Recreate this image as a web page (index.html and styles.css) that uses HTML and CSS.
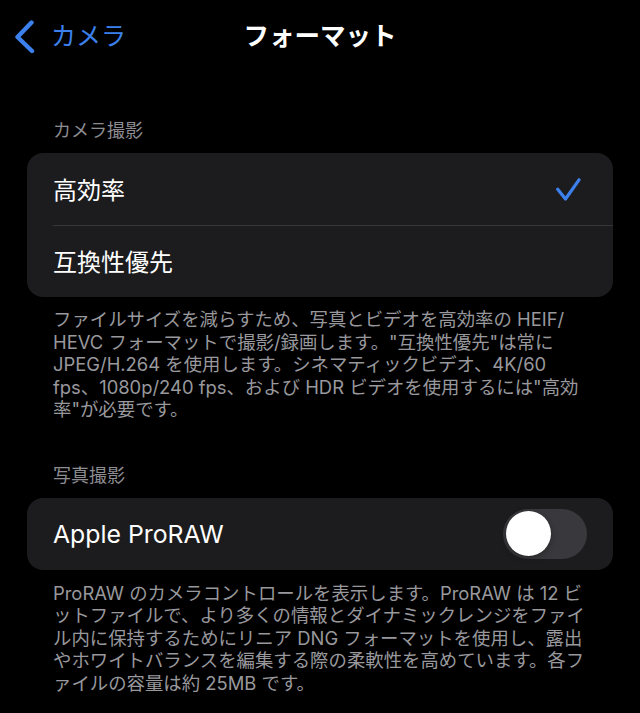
FILE: index.html
```html
<!DOCTYPE html>
<html lang="ja">
<head>
<meta charset="utf-8">
<title>フォーマット</title>
<link rel="stylesheet" href="styles.css">
</head>
<body>
<div class="screen">
  <header class="nav">
    <div class="back">
      <svg class="chevron" width="24" height="36" viewBox="0 0 24 36" aria-hidden="true">
        <path d="M17.5 4.5 L3.5 19 L18 33" fill="none" stroke="#3b80ec" stroke-width="4.4" stroke-linecap="round" stroke-linejoin="round"/>
      </svg>
      <span class="back-label">カメラ</span>
    </div>
    <h1 class="title">フォーマット</h1>
    <div class="spacer"></div>
  </header>

  <section class="group group-first">
    <div class="group-header">カメラ撮影</div>
    <div class="card">
      <div class="row">
        <span class="label">高効率</span>
        <svg class="check" width="26" height="24" viewBox="0 0 26 24" aria-hidden="true">
          <path d="M2.7 12.3 L10.5 22 L24 2.8" fill="none" stroke="#3b80ec" stroke-width="3.2" stroke-linecap="round" stroke-linejoin="round"/>
        </svg>
      </div>
      <div class="row row-sep">
        <span class="label">互換性優先</span>
      </div>
    </div>
    <p class="group-footer">ファイルサイズを減らすため、写真とビデオを高効率の HEIF/<br>HEVC フォーマットで撮影/録画します。"互換性優先"は常に<br>JPEG/H.264 を使用します。シネマティックビデオ、4K/60<br>fps、1080p/240 fps、および HDR ビデオを使用するには"高効<br>率"が必要です。</p>
  </section>

  <section class="group group-second">
    <div class="group-header">写真撮影</div>
    <div class="card">
      <div class="row">
        <span class="label label-latin">Apple ProRAW</span>
        <span class="toggle"><span class="knob"></span></span>
      </div>
    </div>
    <p class="group-footer footer-second">ProRAW のカメラコントロールを表示します。ProRAW は 12 ビ<br>ットファイルで、より多くの情報とダイナミックレンジをファイ<br>ル内に保持するためにリニア DNG フォーマットを使用し、露出<br>やホワイトバランスを編集する際の柔軟性を高めています。各フ<br>ァイルの容量は約 25MB です。</p>
  </section>
</div>
</body>
</html>
```

FILE: styles.css
```css
* {
  box-sizing: border-box;
}

html, body {
  margin: 0;
  padding: 0;
  background: #000;
}

body {
  font-family: "Inter", "Noto Sans CJK JP", sans-serif;
  color: #fff;
  width: 640px;
  height: 713px;
  overflow: hidden;
}

.screen {
  display: flex;
  flex-direction: column;
}

.nav {
  height: 72px;
  display: grid;
  grid-template-columns: 1fr auto 1fr;
  align-items: center;
}

.back {
  display: flex;
  align-items: center;
  padding-left: 14px;
  gap: 13px;
}

.chevron {
  display: block;
}

.back-label {
  font-size: 25px;
  color: #3b80ec;
  line-height: 1;
}

.title {
  margin: 0;
  font-size: 25.5px;
  font-weight: 700;
  line-height: 1;
  color: #fff;
}

.group {
  padding: 0 27px;
}

.group-first {
  margin-top: 48px;
}

.group-second {
  margin-top: 44px;
}

.group-header {
  padding-left: 26px;
  font-size: 18px;
  line-height: 22px;
  color: #8d8d92;
  margin-bottom: 11px;
}

.card {
  background: #1c1c1e;
  border-radius: 16px;
  overflow: hidden;
}

.row {
  height: 72px;
  display: flex;
  align-items: center;
  justify-content: space-between;
  padding: 0 26px;
  position: relative;
}

.row-sep::before {
  content: "";
  position: absolute;
  left: 26px;
  right: 0;
  top: 0;
  height: 1px;
  background: #363638;
}

.label {
  font-size: 24px;
  line-height: 1;
  padding-top: 4px;
  color: #fff;
}

.label-latin {
  font-size: 24.8px;
  padding-top: 2px;
}

.check {
  display: block;
  margin-right: 6px;
}

.toggle {
  width: 84px;
  height: 50px;
  border-radius: 25px;
  background: #39393d;
  display: flex;
  align-items: center;
  padding-left: 3px;
}

.knob {
  width: 45px;
  height: 45px;
  border-radius: 50%;
  background: #fff;
  box-shadow: 0 2px 6px rgba(0, 0, 0, 0.35);
}

.group-footer {
  margin: 11px 0 0;
  padding-left: 26px;
  font-size: 18.4px;
  line-height: 22.5px;
  color: #98989d;
  white-space: nowrap;
}

.footer-second {
  margin-top: 12px;
}
```
